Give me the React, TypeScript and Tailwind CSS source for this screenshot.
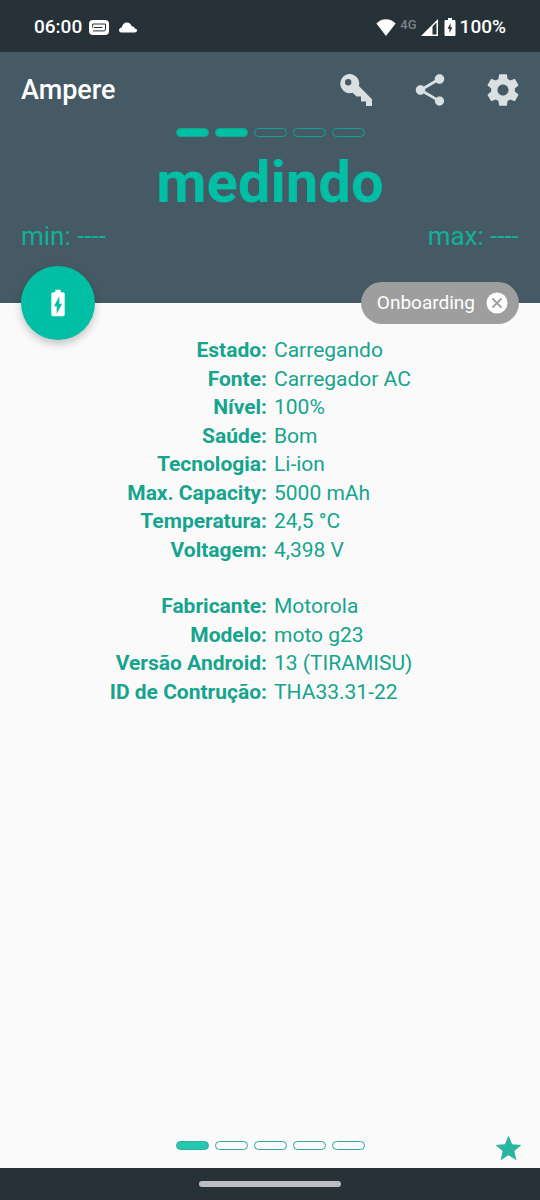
import React from "react";
import { MdBatteryChargingFull, MdShare, MdStar } from "react-icons/md";

const batteryInfo = [
  ["Estado:", "Carregando"],
  ["Fonte:", "Carregador AC"],
  ["Nível:", "100%"],
  ["Saúde:", "Bom"],
  ["Tecnologia:", "Li-ion"],
  ["Max. Capacity:", "5000 mAh"],
  ["Temperatura:", "24,5 °C"],
  ["Voltagem:", "4,398 V"],
];

const deviceInfo = [
  ["Fabricante:", "Motorola"],
  ["Modelo:", "moto g23"],
  ["Versão Android:", "13 (TIRAMISU)"],
  ["ID de Contrução:", "THA33.31-22"],
];

function KeyIcon() {
  return (
    <svg viewBox="0 0 32 32" className="size-8" fill="currentColor" aria-hidden="true">
      <path
        fillRule="evenodd"
        d="M9.6 0a9.6 9.6 0 0 1 9.3 12L32 25.2V32h-6v-4.6h-5V22.4h-4.4L12.6 18.8A9.6 9.6 0 1 1 9.6 0zM8.2 5a3.2 3.2 0 1 0 0 6.4 3.2 3.2 0 0 0 0-6.4z"
      />
    </svg>
  );
}

function GearIcon() {
  return (
    <svg viewBox="0 0 24 24" className="size-[38px]" fill="currentColor" aria-hidden="true">
      <path d="M19.43 12.98c.04-.32.07-.64.07-.98s-.03-.66-.07-.98l2.11-1.65c.19-.15.24-.42.12-.64l-2-3.46c-.12-.22-.39-.3-.61-.22l-2.49 1c-.52-.4-1.08-.73-1.69-.98l-.38-2.65C14.46 2.18 14.25 2 14 2h-4c-.25 0-.46.18-.49.42l-.38 2.65c-.61.25-1.17.59-1.69.98l-2.49-1c-.23-.09-.49 0-.61.22l-2 3.46c-.13.22-.07.49.12.64l2.11 1.65c-.04.32-.07.65-.07.98s.03.66.07.98l-2.11 1.65c-.19.15-.24.42-.12.64l2 3.46c.12.22.39.3.61.22l2.49-1c.52.4 1.08.73 1.69.98l.38 2.65c.03.24.24.42.49.42h4c.25 0 .46-.18.49-.42l.38-2.65c.61-.25 1.17-.59 1.69-.98l2.49 1c.23.09.49 0 .61-.22l2-3.46c.12-.22.07-.49-.12-.64l-2.11-1.65zM12 15.5c-1.93 0-3.5-1.57-3.5-3.5s1.57-3.5 3.5-3.5 3.5 1.57 3.5 3.5-1.57 3.5-3.5 3.5z" />
    </svg>
  );
}

function StatusBar() {
  return (
    <div className="flex h-[52px] items-center justify-between bg-[#263238] px-[34px] pt-[2px] text-white">
      <div className="flex items-center">
        <span className="text-[19px] leading-6 font-medium">06:00</span>
        <svg viewBox="0 0 20 15" className="ml-[7px] h-[15px] w-5" aria-hidden="true">
          <rect width="20" height="15" rx="4" fill="#fff" />
          <path d="M3.700 7.500V4H16.500v5.200a1.700 1.700 0 0 1-1.700 1.700H4M5 7.500H13.500" fill="none" stroke="#263238" />
        </svg>
        <svg viewBox="0 0 18 11" className="ml-[10px] h-[11px] w-[18px]" fill="currentColor" aria-hidden="true">
          <path d="M3.200 10.500C1.300 10.500 0 9.600 0 8.200c0-1.300 1.100-2.400 2.700-2.700C3.600 2.300 5.400.5 7.800.5c2.500 0 4.200 1.500 4.900 3.700 2 .1 2.900 1 3.100 2.400 1.400.1 2.200.8 2.200 1.900 0 1.200-1 2-2.400 2z" />
        </svg>
      </div>
      <div className="flex items-center">
        <svg viewBox="0 0 20 17" className="h-[17px] w-5" fill="currentColor" aria-hidden="true">
          <path d="M10 17 .4 4.600C3 1.600 6.300.2 10 .2s7 1.400 9.600 4.400z" />
        </svg>
        <span className="ml-1 pb-1 text-[13px] leading-4 font-medium text-[#7b8388]">4G</span>
        <svg viewBox="0 0 17 17" className="ml-1 size-[17px]" fill="currentColor" aria-hidden="true">
          <path fillRule="evenodd" d="M0 17 17 0v17zM11.500 7.500V15.500h4V3.500z" />
        </svg>
        <svg viewBox="0 0 12 18" className="ml-[6px] h-[18px] w-3" aria-hidden="true">
          <path d="M4 0h4v2h2.200c.7 0 1.300.6 1.300 1.300v13.400c0 .7-.6 1.300-1.300 1.300H1.800C1.100 18 .5 17.400.5 16.700V3.300C.5 2.600 1.100 2 1.800 2H4z" fill="#fff" />
          <path d="M6.500 5 3.600 10.700h1.900v4.200l2.900-5.700H6.500z" fill="#263238" />
        </svg>
        <span className="ml-1 text-[19px] leading-6 font-medium">100%</span>
      </div>
    </div>
  );
}

function HeaderPager() {
  return (
    <div className="flex justify-center gap-[6px]">
      {[0, 1, 2, 3, 4].map((i) => (
        <span
          key={i}
          className={
            i < 2
              ? "h-[9px] w-[33px] rounded-full border border-[#12a88f] bg-[#00bfa5]"
              : "h-[9px] w-[33px] rounded-full border border-[#13a391]"
          }
        />
      ))}
    </div>
  );
}

function FooterPager() {
  return (
    <div className="flex justify-center gap-[6px]">
      {[0, 1, 2, 3, 4].map((i) => (
        <span
          key={i}
          className={
            i < 1
              ? "h-[9px] w-[33px] rounded-full border border-[#2bb39f] bg-[#26c6b0]"
              : "h-[9px] w-[33px] rounded-full border border-[#2aa996]"
          }
        />
      ))}
    </div>
  );
}

function InfoList({ rows, className }: { rows: string[][]; className: string }) {
  return (
    <dl className={className}>
      {rows.map(([label, value]) => (
        <React.Fragment key={label}>
          <dt className="text-right font-bold">{label}</dt>
          <dd>{value}</dd>
        </React.Fragment>
      ))}
    </dl>
  );
}

export default function App() {
  return (
    <div className="flex min-h-screen flex-col bg-[#fafafa] font-['Roboto',sans-serif]">
      <StatusBar />
      <header className="bg-[#455a64] px-[21px] pb-[51px]">
        <div className="flex h-[76px] items-center justify-between">
          <h1 className="text-[27px] leading-8 font-medium text-white">Ampere</h1>
          <div className="-mr-[3px] flex items-center text-[#dae0e2]">
            <button type="button" aria-label="Key">
              <KeyIcon />
            </button>
            <button type="button" aria-label="Share" className="ml-[39px]">
              <MdShare className="size-[38px]" />
            </button>
            <button type="button" aria-label="Settings" className="ml-[35px]">
              <GearIcon />
            </button>
          </div>
        </div>
        <HeaderPager />
        <p className="mt-[11px] text-center text-[58px] leading-[68px] font-bold text-[#00bfa5]">medindo</p>
        <div className="mt-1 flex justify-between text-[26px] leading-8 text-[#12b09a]">
          <span>min: ----</span>
          <span>max: ----</span>
        </div>
      </header>
      <div className="relative -mt-[37px] -mb-1 flex items-center justify-between px-[21px]">
        <button
          type="button"
          aria-label="Battery"
          className="flex size-[74px] items-center justify-center rounded-full bg-[#00bfa5] text-white shadow-[0_4px_8px_rgba(0,0,0,0.22)]"
        >
          <MdBatteryChargingFull className="size-8" />
        </button>
        <button
          type="button"
          className="flex h-[42px] items-center gap-[10px] rounded-full bg-[#9e9e9e] pr-[10px] pl-4 text-[19px] leading-6 text-white"
        >
          Onboarding
          <svg viewBox="0 0 24 24" className="size-6" aria-hidden="true">
            <circle cx="12" cy="12" r="10.500" fill="#fff" />
            <path d="m7.400 7.400 9.200 9.200m0-9.200-9.200 9.200" stroke="#9e9e9e" strokeWidth="2" />
          </svg>
        </button>
      </div>
      <main className="flex-1 text-[21px] leading-7 text-[#16a48e]">
        <InfoList rows={batteryInfo} className="grid min-h-[228px] grid-cols-[267fr_266fr] gap-x-[7px]" />
        <InfoList rows={deviceInfo} className="mt-7 grid min-h-[114px] grid-cols-[267fr_266fr] gap-x-[7px]" />
      </main>
      <footer className="grid h-[38px] grid-cols-[1fr_auto_1fr] px-4 pt-[3px]">
        <span />
        <div className="pt-2">
          <FooterPager />
        </div>
        <button type="button" aria-label="Favorite" className="self-start justify-self-end text-[#2ab5a0]">
          <MdStar className="size-[31px]" />
        </button>
      </footer>
      <div className="flex h-8 items-center justify-center bg-[#263238]">
        <span className="h-[6px] w-[142px] rounded-full bg-[#bbbdc2]" />
      </div>
    </div>
  );
}
